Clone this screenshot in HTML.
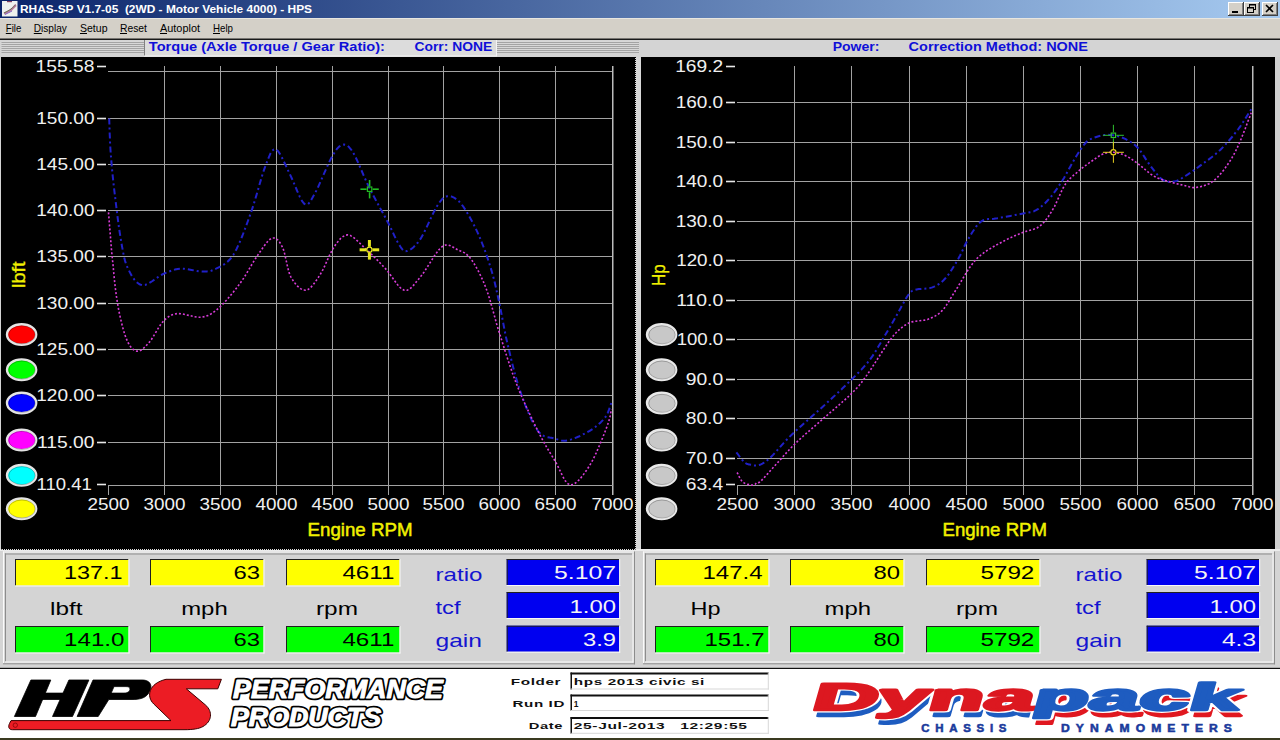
<!DOCTYPE html><html><head><meta charset="utf-8"><style>html,body{margin:0;padding:0;background:#d4d4d4;overflow:hidden}svg{display:block}text{font-family:"Liberation Sans",sans-serif;white-space:pre}</style></head><body>
<svg width="1280" height="740" viewBox="0 0 1280 740" shape-rendering="auto">
<defs><linearGradient id="tg" x1="0" x2="1" y1="0" y2="0"><stop offset="0" stop-color="#0a246a"/><stop offset="1" stop-color="#a6caf0"/></linearGradient><pattern id="checker" x="0" y="0" width="2" height="2" patternUnits="userSpaceOnUse"><rect width="2" height="2" fill="#d8d8d8"/><rect width="1" height="1" fill="#000"/><rect x="1" y="1" width="1" height="1" fill="#000"/></pattern><pattern id="stripe" x="0" y="41" width="4" height="2" patternUnits="userSpaceOnUse"><rect width="4" height="1" fill="#d8d8d8"/><rect y="1" width="4" height="1" fill="#a4a4a4"/></pattern></defs>
<rect x="0" y="0" width="1280" height="740" fill="#d4d4d4" />
<rect x="0" y="0" width="1280" height="18" fill="url(#tg)" />
<g><rect x="2" y="1" width="15.5" height="15.5" fill="#eef2ee"/><path d="M4 13.5 C7 12 9 11.5 11 10 C13 8.5 14 6.5 16 5" stroke="#c080a0" stroke-width="2.2" fill="none"/><path d="M4 13 C7 11.5 9 10.5 11 9 C13 7.5 14 6 15.5 5" stroke="#607050" stroke-width="1" fill="none"/><path d="M5 14.5 C8 13 10 12 12 11" stroke="#8060c0" stroke-width="1" fill="none"/><rect x="7" y="1" width="5" height="1.2" fill="#804060"/></g>
<text x="20.00" y="12.80" font-size="11" font-weight="bold" font-style="normal" fill="#fff" textLength="292.00" lengthAdjust="spacingAndGlyphs" >RHAS-SP V1.7-05  (2WD - Motor Vehicle 4000) - HPS</text>
<rect x="1228" y="2" width="16" height="14" fill="#d4d0c8" />
<line x1="1228" y1="2.5" x2="1243" y2="2.5" stroke="#fff" stroke-width="1" />
<line x1="1228.5" y1="2" x2="1228.5" y2="15" stroke="#fff" stroke-width="1" />
<line x1="1228" y1="15.5" x2="1244" y2="15.5" stroke="#404040" stroke-width="1" />
<line x1="1243.5" y1="2" x2="1243.5" y2="16" stroke="#404040" stroke-width="1" />
<line x1="1229" y1="14.5" x2="1243" y2="14.5" stroke="#808080" stroke-width="1" />
<line x1="1242.5" y1="3" x2="1242.5" y2="15" stroke="#808080" stroke-width="1" />
<rect x="1232" y="11" width="6" height="2" fill="#000"/>
<rect x="1244" y="2" width="16" height="14" fill="#d4d0c8" />
<line x1="1244" y1="2.5" x2="1259" y2="2.5" stroke="#fff" stroke-width="1" />
<line x1="1244.5" y1="2" x2="1244.5" y2="15" stroke="#fff" stroke-width="1" />
<line x1="1244" y1="15.5" x2="1260" y2="15.5" stroke="#404040" stroke-width="1" />
<line x1="1259.5" y1="2" x2="1259.5" y2="16" stroke="#404040" stroke-width="1" />
<line x1="1245" y1="14.5" x2="1259" y2="14.5" stroke="#808080" stroke-width="1" />
<line x1="1258.5" y1="3" x2="1258.5" y2="15" stroke="#808080" stroke-width="1" />
<rect x="1249.5" y="4.5" width="6" height="5" fill="none" stroke="#000"/><rect x="1249" y="4" width="7" height="1.5" fill="#000"/><rect x="1247.5" y="7.5" width="6" height="5" fill="#d4d0c8" stroke="#000"/><rect x="1247" y="7" width="7" height="1.5" fill="#000"/>
<rect x="1262" y="2" width="16" height="14" fill="#d4d0c8" />
<line x1="1262" y1="2.5" x2="1277" y2="2.5" stroke="#fff" stroke-width="1" />
<line x1="1262.5" y1="2" x2="1262.5" y2="15" stroke="#fff" stroke-width="1" />
<line x1="1262" y1="15.5" x2="1278" y2="15.5" stroke="#404040" stroke-width="1" />
<line x1="1277.5" y1="2" x2="1277.5" y2="16" stroke="#404040" stroke-width="1" />
<line x1="1263" y1="14.5" x2="1277" y2="14.5" stroke="#808080" stroke-width="1" />
<line x1="1276.5" y1="3" x2="1276.5" y2="15" stroke="#808080" stroke-width="1" />
<path d="M1266 5 L1273 12 M1273 5 L1266 12" stroke="#000" stroke-width="1.6"/>
<rect x="0" y="18" width="1280" height="21" fill="#d4d0c8" />
<line x1="0" y1="18.5" x2="1280" y2="18.5" stroke="#e8e6e0" stroke-width="1" />
<text x="5.80" y="31.80" font-size="11" font-weight="normal" font-style="normal" fill="#000" textLength="15.60" lengthAdjust="spacingAndGlyphs" >File</text>
<rect x="5.8" y="33" width="6" height="1" fill="#000" />
<text x="33.80" y="31.80" font-size="11" font-weight="normal" font-style="normal" fill="#000" textLength="33.00" lengthAdjust="spacingAndGlyphs" >Display</text>
<rect x="33.8" y="33" width="8" height="1" fill="#000" />
<text x="80.00" y="31.80" font-size="11" font-weight="normal" font-style="normal" fill="#000" textLength="27.50" lengthAdjust="spacingAndGlyphs" >Setup</text>
<rect x="80" y="33" width="7" height="1" fill="#000" />
<text x="120.00" y="31.80" font-size="11" font-weight="normal" font-style="normal" fill="#000" textLength="27.00" lengthAdjust="spacingAndGlyphs" >Reset</text>
<rect x="120" y="33" width="7" height="1" fill="#000" />
<text x="160.00" y="31.80" font-size="11" font-weight="normal" font-style="normal" fill="#000" textLength="40.00" lengthAdjust="spacingAndGlyphs" >Autoplot</text>
<rect x="160" y="33" width="7" height="1" fill="#000" />
<text x="213.00" y="31.80" font-size="11" font-weight="normal" font-style="normal" fill="#000" textLength="20.00" lengthAdjust="spacingAndGlyphs" >Help</text>
<rect x="213" y="33" width="7" height="1" fill="#000" />
<rect x="0" y="38.5" width="1280" height="1.5" fill="#1a1a1a" />
<rect x="0" y="40" width="1280" height="17" fill="#d4d4d4" />
<rect x="1.5" y="41" width="142.5" height="12" fill="url(#stripe)" />
<rect x="144" y="40" width="353" height="16" fill="#dcdcdc" />
<rect x="144" y="40" width="1" height="16" fill="#808080" />
<rect x="144" y="55.5" width="353" height="1" fill="#f4f4f4" />
<rect x="496" y="40" width="1" height="16" fill="#f4f4f4" />
<rect x="497" y="41" width="142" height="12" fill="url(#stripe)" />
<text x="148.80" y="51.00" font-size="13.5" font-weight="bold" font-style="normal" fill="#0f0fd8" textLength="236.20" lengthAdjust="spacingAndGlyphs" >Torque (Axle Torque / Gear Ratio):</text>
<text x="414.50" y="51.00" font-size="13.5" font-weight="bold" font-style="normal" fill="#0f0fd8" textLength="77.70" lengthAdjust="spacingAndGlyphs" >Corr: NONE</text>
<text x="832.70" y="51.00" font-size="13.5" font-weight="bold" font-style="normal" fill="#0f0fd8" textLength="46.80" lengthAdjust="spacingAndGlyphs" >Power:</text>
<text x="908.60" y="51.00" font-size="13.5" font-weight="bold" font-style="normal" fill="#0f0fd8" textLength="179.40" lengthAdjust="spacingAndGlyphs" >Correction Method: NONE</text>
<rect x="1" y="57" width="634" height="492" fill="#000" />
<rect x="641" y="57" width="634" height="492" fill="#000" />
<rect x="635" y="57" width="6" height="493" fill="#d8d8d8" />
<rect x="635" y="57" width="1" height="493" fill="url(#checker)" />
<rect x="1275" y="57" width="5" height="492" fill="#d0d0d0" />
<line x1="108" y1="71.5" x2="613" y2="71.5" stroke="#a2a2a2" stroke-width="1" />
<line x1="108" y1="118.5" x2="613" y2="118.5" stroke="#a2a2a2" stroke-width="1" />
<line x1="108" y1="164.5" x2="613" y2="164.5" stroke="#a2a2a2" stroke-width="1" />
<line x1="108" y1="210.5" x2="613" y2="210.5" stroke="#a2a2a2" stroke-width="1" />
<line x1="108" y1="256.5" x2="613" y2="256.5" stroke="#a2a2a2" stroke-width="1" />
<line x1="108" y1="303.5" x2="613" y2="303.5" stroke="#a2a2a2" stroke-width="1" />
<line x1="108" y1="349.5" x2="613" y2="349.5" stroke="#a2a2a2" stroke-width="1" />
<line x1="108" y1="395.5" x2="613" y2="395.5" stroke="#a2a2a2" stroke-width="1" />
<line x1="108" y1="442.5" x2="613" y2="442.5" stroke="#a2a2a2" stroke-width="1" />
<line x1="164.5" y1="66" x2="164.5" y2="495" stroke="#a2a2a2" stroke-width="1" />
<line x1="220.5" y1="66" x2="220.5" y2="495" stroke="#a2a2a2" stroke-width="1" />
<line x1="276.5" y1="66" x2="276.5" y2="495" stroke="#a2a2a2" stroke-width="1" />
<line x1="332.5" y1="66" x2="332.5" y2="495" stroke="#a2a2a2" stroke-width="1" />
<line x1="388.5" y1="66" x2="388.5" y2="495" stroke="#a2a2a2" stroke-width="1" />
<line x1="443.5" y1="66" x2="443.5" y2="495" stroke="#a2a2a2" stroke-width="1" />
<line x1="499.5" y1="66" x2="499.5" y2="495" stroke="#a2a2a2" stroke-width="1" />
<line x1="555.5" y1="66" x2="555.5" y2="495" stroke="#a2a2a2" stroke-width="1" />
<line x1="612.75" y1="66" x2="612.75" y2="495" stroke="#bcbcbc" stroke-width="1.5" />
<line x1="108.5" y1="485" x2="108.5" y2="495" stroke="#a2a2a2" stroke-width="1" />
<line x1="108" y1="485.5" x2="613" y2="485.5" stroke="#a2a2a2" stroke-width="1" />
<line x1="97" y1="66.5" x2="106" y2="66.5" stroke="#e8e8e8" stroke-width="1.6" />
<text x="35.50" y="72.00" font-size="16.5" font-weight="normal" font-style="normal" fill="#f0f0f0" textLength="59.00" lengthAdjust="spacingAndGlyphs" >155.58</text>
<line x1="97" y1="118.5" x2="106" y2="118.5" stroke="#e8e8e8" stroke-width="1.6" />
<text x="36.20" y="124.00" font-size="16.5" font-weight="normal" font-style="normal" fill="#f0f0f0" textLength="58.30" lengthAdjust="spacingAndGlyphs" >150.00</text>
<line x1="97" y1="164.5" x2="106" y2="164.5" stroke="#e8e8e8" stroke-width="1.6" />
<text x="36.20" y="170.00" font-size="16.5" font-weight="normal" font-style="normal" fill="#f0f0f0" textLength="58.30" lengthAdjust="spacingAndGlyphs" >145.00</text>
<line x1="97" y1="210.5" x2="106" y2="210.5" stroke="#e8e8e8" stroke-width="1.6" />
<text x="36.20" y="216.00" font-size="16.5" font-weight="normal" font-style="normal" fill="#f0f0f0" textLength="58.30" lengthAdjust="spacingAndGlyphs" >140.00</text>
<line x1="97" y1="256.5" x2="106" y2="256.5" stroke="#e8e8e8" stroke-width="1.6" />
<text x="36.20" y="262.00" font-size="16.5" font-weight="normal" font-style="normal" fill="#f0f0f0" textLength="58.30" lengthAdjust="spacingAndGlyphs" >135.00</text>
<line x1="97" y1="303.5" x2="106" y2="303.5" stroke="#e8e8e8" stroke-width="1.6" />
<text x="36.20" y="309.00" font-size="16.5" font-weight="normal" font-style="normal" fill="#f0f0f0" textLength="58.30" lengthAdjust="spacingAndGlyphs" >130.00</text>
<line x1="97" y1="349.5" x2="106" y2="349.5" stroke="#e8e8e8" stroke-width="1.6" />
<text x="36.20" y="355.00" font-size="16.5" font-weight="normal" font-style="normal" fill="#f0f0f0" textLength="58.30" lengthAdjust="spacingAndGlyphs" >125.00</text>
<line x1="97" y1="395.5" x2="106" y2="395.5" stroke="#e8e8e8" stroke-width="1.6" />
<text x="36.20" y="401.00" font-size="16.5" font-weight="normal" font-style="normal" fill="#f0f0f0" textLength="58.30" lengthAdjust="spacingAndGlyphs" >120.00</text>
<line x1="97" y1="442.5" x2="106" y2="442.5" stroke="#e8e8e8" stroke-width="1.6" />
<text x="37.00" y="448.00" font-size="16.5" font-weight="normal" font-style="normal" fill="#f0f0f0" textLength="57.50" lengthAdjust="spacingAndGlyphs" >115.00</text>
<line x1="97" y1="484.5" x2="106" y2="484.5" stroke="#e8e8e8" stroke-width="1.6" />
<text x="36.50" y="490.00" font-size="16.5" font-weight="normal" font-style="normal" fill="#f0f0f0" textLength="55.30" lengthAdjust="spacingAndGlyphs" >110.41</text>
<text x="87.50" y="510.00" font-size="16.5" font-weight="normal" font-style="normal" fill="#f0f0f0" textLength="42.00" lengthAdjust="spacingAndGlyphs" >2500</text>
<text x="143.50" y="510.00" font-size="16.5" font-weight="normal" font-style="normal" fill="#f0f0f0" textLength="42.00" lengthAdjust="spacingAndGlyphs" >3000</text>
<text x="199.50" y="510.00" font-size="16.5" font-weight="normal" font-style="normal" fill="#f0f0f0" textLength="42.00" lengthAdjust="spacingAndGlyphs" >3500</text>
<text x="255.50" y="510.00" font-size="16.5" font-weight="normal" font-style="normal" fill="#f0f0f0" textLength="42.00" lengthAdjust="spacingAndGlyphs" >4000</text>
<text x="311.50" y="510.00" font-size="16.5" font-weight="normal" font-style="normal" fill="#f0f0f0" textLength="42.00" lengthAdjust="spacingAndGlyphs" >4500</text>
<text x="367.50" y="510.00" font-size="16.5" font-weight="normal" font-style="normal" fill="#f0f0f0" textLength="42.00" lengthAdjust="spacingAndGlyphs" >5000</text>
<text x="422.50" y="510.00" font-size="16.5" font-weight="normal" font-style="normal" fill="#f0f0f0" textLength="42.00" lengthAdjust="spacingAndGlyphs" >5500</text>
<text x="478.50" y="510.00" font-size="16.5" font-weight="normal" font-style="normal" fill="#f0f0f0" textLength="42.00" lengthAdjust="spacingAndGlyphs" >6000</text>
<text x="534.50" y="510.00" font-size="16.5" font-weight="normal" font-style="normal" fill="#f0f0f0" textLength="42.00" lengthAdjust="spacingAndGlyphs" >6500</text>
<text x="591.50" y="510.00" font-size="16.5" font-weight="normal" font-style="normal" fill="#f0f0f0" textLength="42.00" lengthAdjust="spacingAndGlyphs" >7000</text>
<path d="M109.2 118.5 L109.3 121.9 L109.5 126.4 L109.6 131.9 L109.9 137.9 L110.1 144.0 L110.5 150.0 L110.9 155.8 L111.4 161.6 L111.9 167.6 L112.5 173.9 L113.2 180.6 L114.0 187.8 L115.0 196.0 L116.1 205.2 L117.3 214.8 L118.5 224.2 L119.8 233.0 L121.0 240.5 L122.1 246.8 L123.1 252.1 L124.0 256.9 L125.1 261.1 L126.4 265.0 L128.0 268.7 L129.9 272.4 L131.9 276.1 L134.2 279.4 L136.7 282.2 L139.4 284.2 L142.2 285.2 L145.3 284.9 L148.8 283.3 L152.5 281.0 L156.2 278.3 L159.8 275.8 L163.2 274.0 L166.3 272.7 L169.2 271.5 L172.0 270.5 L174.8 269.6 L177.7 269.0 L180.8 268.7 L184.2 268.8 L187.8 269.2 L191.6 269.9 L195.3 270.7 L198.7 271.3 L201.9 271.5 L204.6 271.5 L207.0 271.4 L209.2 271.2 L211.3 270.7 L213.5 269.9 L216.0 268.7 L218.7 267.3 L221.6 265.9 L224.5 264.1 L227.5 261.8 L230.5 258.7 L233.5 254.6 L236.5 249.2 L239.5 242.7 L242.5 235.5 L245.4 227.8 L248.3 220.0 L251.0 212.4 L253.6 204.7 L256.1 196.4 L258.5 188.1 L260.8 180.1 L263.0 172.8 L265.1 166.8 L267.0 161.8 L268.8 157.3 L270.4 153.6 L272.0 150.9 L273.8 149.4 L275.7 149.2 L277.8 150.8 L280.1 154.1 L282.4 158.5 L284.9 163.6 L287.3 168.9 L289.7 173.8 L292.1 179.0 L294.7 184.9 L297.2 191.0 L299.7 196.6 L302.1 201.1 L304.3 203.8 L306.3 204.6 L308.0 204.1 L309.6 202.5 L311.2 199.9 L313.0 196.7 L315.1 193.0 L317.6 188.3 L320.3 182.2 L323.2 175.5 L326.2 168.8 L328.9 162.7 L331.4 157.8 L333.5 154.1 L335.4 151.1 L337.1 148.7 L338.8 146.9 L340.5 145.6 L342.2 144.9 L343.9 144.6 L345.6 144.9 L347.3 145.6 L349.0 147.1 L350.9 149.3 L353.0 152.4 L355.4 156.7 L357.9 162.1 L360.6 168.3 L363.4 174.8 L366.3 181.4 L369.2 187.6 L372.3 193.6 L375.6 199.8 L379.0 206.0 L382.3 212.0 L385.4 217.6 L388.1 222.7 L390.4 227.3 L392.4 231.4 L394.2 235.3 L395.8 238.7 L397.4 241.7 L398.9 244.3 L400.3 246.5 L401.6 248.4 L402.8 249.8 L404.0 250.8 L405.4 251.2 L407.0 251.1 L408.9 250.4 L411.0 249.2 L413.2 247.4 L415.6 245.2 L418.0 242.3 L420.5 238.9 L423.1 234.4 L425.9 228.8 L428.8 222.6 L431.7 216.4 L434.4 210.9 L436.8 206.5 L438.9 203.3 L440.7 200.8 L442.4 198.8 L444.0 197.5 L445.7 196.6 L447.6 196.2 L449.7 196.2 L451.8 196.6 L454.0 197.6 L456.3 199.1 L458.7 201.1 L461.1 203.8 L463.7 207.2 L466.4 211.4 L469.2 216.2 L472.0 221.3 L474.8 226.6 L477.3 231.9 L479.7 237.3 L482.0 243.0 L484.3 248.8 L486.4 254.7 L488.4 260.7 L490.3 266.5 L492.0 272.2 L493.5 277.7 L494.9 283.2 L496.2 288.9 L497.5 294.7 L498.9 301.0 L500.3 307.7 L501.6 314.6 L503.0 321.8 L504.4 329.2 L505.9 336.7 L507.6 344.3 L509.5 352.1 L511.4 360.2 L513.5 368.4 L515.7 376.5 L518.0 384.4 L520.5 391.9 L523.1 399.2 L525.9 406.7 L528.9 413.8 L531.9 420.5 L534.9 426.2 L537.8 430.8 L540.7 434.0 L543.7 435.9 L546.7 437.0 L549.7 437.6 L552.5 438.0 L555.1 438.6 L557.4 439.4 L559.4 440.0 L561.3 440.5 L563.3 440.8 L565.5 440.7 L568.1 440.3 L571.3 439.4 L574.9 438.1 L578.8 436.5 L582.7 434.6 L586.4 432.7 L589.7 430.8 L592.7 428.9 L595.6 426.8 L598.2 424.6 L600.7 422.4 L602.9 420.1 L604.9 417.8 L606.6 415.2 L608.0 412.4 L609.1 409.4 L610.0 406.7 L610.8 404.4 L611.4 402.7" fill="none" stroke="#2020c8" stroke-width="2" stroke-dasharray="6 3 2 3" stroke-linejoin="round"/>
<path d="M108.5 212.4 L108.9 217.4 L109.4 224.2 L110.1 232.3 L110.8 241.1 L111.5 249.9 L112.3 258.0 L113.1 265.7 L113.8 273.6 L114.6 281.6 L115.5 289.3 L116.5 296.8 L117.6 303.8 L118.8 310.5 L120.2 317.1 L121.7 323.4 L123.2 329.3 L124.8 334.5 L126.4 338.9 L128.0 342.5 L129.7 345.5 L131.4 347.8 L133.2 349.5 L135.0 350.6 L136.9 351.2 L138.8 351.1 L140.8 350.3 L142.8 348.9 L144.9 347.0 L147.0 344.8 L149.2 342.4 L151.4 339.5 L153.7 335.8 L156.1 331.8 L158.5 327.9 L160.8 324.3 L163.2 321.4 L165.4 319.2 L167.5 317.4 L169.6 316.0 L171.8 314.9 L174.3 314.1 L177.3 313.6 L180.9 313.7 L185.0 314.5 L189.4 315.5 L193.8 316.6 L198.1 317.2 L201.9 317.2 L205.2 316.5 L208.2 315.4 L210.9 314.0 L213.6 312.2 L216.5 310.0 L219.5 307.3 L222.8 304.1 L226.4 300.3 L230.0 296.1 L233.6 291.7 L237.2 287.2 L240.5 282.7 L243.7 278.1 L246.7 273.2 L249.7 268.1 L252.6 263.2 L255.4 258.7 L258.1 254.6 L260.7 250.9 L263.2 247.3 L265.6 244.0 L267.9 241.2 L270.1 239.2 L272.2 238.1 L274.2 238.0 L276.1 238.6 L277.8 240.0 L279.5 242.0 L281.1 244.6 L282.7 247.6 L284.1 251.5 L285.3 256.5 L286.5 261.9 L287.7 267.5 L289.1 272.6 L290.8 276.8 L292.9 280.3 L295.3 283.6 L297.8 286.4 L300.5 288.6 L303.1 290.0 L305.7 290.3 L308.2 289.4 L310.7 287.5 L313.2 284.7 L315.7 281.3 L318.1 277.7 L320.5 274.0 L322.8 269.9 L325.1 265.2 L327.3 260.2 L329.5 255.3 L331.8 250.8 L334.0 247.0 L336.2 243.8 L338.4 241.0 L340.6 238.5 L342.9 236.6 L345.2 235.3 L347.6 234.9 L350.1 235.4 L352.6 236.8 L355.2 238.8 L357.9 241.4 L360.8 244.2 L363.8 247.0 L367.1 250.0 L370.7 253.5 L374.4 257.2 L378.2 261.0 L381.9 264.9 L385.4 268.6 L388.7 272.6 L392.0 277.1 L395.2 281.6 L398.3 285.7 L401.3 288.7 L404.3 290.3 L407.1 290.3 L409.7 289.0 L412.2 286.8 L414.8 283.8 L417.5 280.4 L420.5 276.8 L423.9 272.3 L427.5 266.7 L431.4 260.6 L435.2 254.7 L438.9 249.8 L442.2 246.5 L445.2 245.1 L448.0 245.0 L450.6 245.8 L453.2 247.2 L455.6 248.7 L458.0 250.0 L460.3 250.9 L462.5 251.8 L464.6 252.9 L466.6 254.3 L468.8 256.3 L471.0 259.0 L473.4 262.5 L475.9 266.7 L478.5 271.4 L481.1 276.6 L483.6 282.2 L486.0 288.1 L488.2 294.4 L490.3 301.2 L492.3 308.3 L494.4 315.8 L496.5 323.5 L498.9 331.4 L501.5 339.6 L504.2 348.2 L507.0 357.0 L510.0 365.9 L513.0 374.7 L516.2 383.2 L519.6 391.6 L523.2 400.0 L527.0 408.3 L530.8 416.4 L534.4 423.9 L537.8 430.8 L541.0 436.9 L544.0 442.4 L546.8 447.4 L549.6 452.1 L552.4 456.6 L555.1 461.1 L557.7 465.9 L560.2 471.1 L562.6 476.1 L565.0 480.4 L567.5 483.5 L570.3 484.9 L573.3 484.4 L576.5 482.3 L579.9 479.1 L583.2 474.9 L586.5 470.3 L589.7 465.4 L592.9 459.8 L596.1 453.1 L599.3 445.8 L602.3 438.6 L604.9 432.0 L607.0 426.5 L608.5 422.2 L609.6 418.5 L610.3 415.4 L610.7 412.9 L611.1 410.8 L611.4 409.2" fill="none" stroke="#d83cd8" stroke-width="1.6" stroke-dasharray="2 2" stroke-linejoin="round"/>
<line x1="737" y1="102.5" x2="1253" y2="102.5" stroke="#a2a2a2" stroke-width="1" />
<line x1="737" y1="142.5" x2="1253" y2="142.5" stroke="#a2a2a2" stroke-width="1" />
<line x1="737" y1="181.5" x2="1253" y2="181.5" stroke="#a2a2a2" stroke-width="1" />
<line x1="737" y1="221.5" x2="1253" y2="221.5" stroke="#a2a2a2" stroke-width="1" />
<line x1="737" y1="260.5" x2="1253" y2="260.5" stroke="#a2a2a2" stroke-width="1" />
<line x1="737" y1="300.5" x2="1253" y2="300.5" stroke="#a2a2a2" stroke-width="1" />
<line x1="737" y1="339.5" x2="1253" y2="339.5" stroke="#a2a2a2" stroke-width="1" />
<line x1="737" y1="379.5" x2="1253" y2="379.5" stroke="#a2a2a2" stroke-width="1" />
<line x1="737" y1="418.5" x2="1253" y2="418.5" stroke="#a2a2a2" stroke-width="1" />
<line x1="737" y1="458.5" x2="1253" y2="458.5" stroke="#a2a2a2" stroke-width="1" />
<line x1="794.5" y1="66" x2="794.5" y2="495" stroke="#a2a2a2" stroke-width="1" />
<line x1="851.5" y1="66" x2="851.5" y2="495" stroke="#a2a2a2" stroke-width="1" />
<line x1="909.5" y1="66" x2="909.5" y2="495" stroke="#a2a2a2" stroke-width="1" />
<line x1="966.5" y1="66" x2="966.5" y2="495" stroke="#a2a2a2" stroke-width="1" />
<line x1="1023.5" y1="66" x2="1023.5" y2="495" stroke="#a2a2a2" stroke-width="1" />
<line x1="1080.5" y1="66" x2="1080.5" y2="495" stroke="#a2a2a2" stroke-width="1" />
<line x1="1137.5" y1="66" x2="1137.5" y2="495" stroke="#a2a2a2" stroke-width="1" />
<line x1="1194.5" y1="66" x2="1194.5" y2="495" stroke="#a2a2a2" stroke-width="1" />
<line x1="1252.75" y1="66" x2="1252.75" y2="495" stroke="#bcbcbc" stroke-width="1.5" />
<line x1="737.5" y1="485" x2="737.5" y2="495" stroke="#a2a2a2" stroke-width="1" />
<line x1="737" y1="485.5" x2="1253" y2="485.5" stroke="#a2a2a2" stroke-width="1" />
<line x1="726" y1="66.5" x2="735" y2="66.5" stroke="#e8e8e8" stroke-width="1.6" />
<text x="675.20" y="72.00" font-size="16.5" font-weight="normal" font-style="normal" fill="#f0f0f0" textLength="48.00" lengthAdjust="spacingAndGlyphs" >169.2</text>
<line x1="726" y1="102.5" x2="735" y2="102.5" stroke="#e8e8e8" stroke-width="1.6" />
<text x="675.70" y="108.00" font-size="16.5" font-weight="normal" font-style="normal" fill="#f0f0f0" textLength="47.50" lengthAdjust="spacingAndGlyphs" >160.0</text>
<line x1="726" y1="142.5" x2="735" y2="142.5" stroke="#e8e8e8" stroke-width="1.6" />
<text x="675.70" y="148.00" font-size="16.5" font-weight="normal" font-style="normal" fill="#f0f0f0" textLength="47.50" lengthAdjust="spacingAndGlyphs" >150.0</text>
<line x1="726" y1="181.5" x2="735" y2="181.5" stroke="#e8e8e8" stroke-width="1.6" />
<text x="675.70" y="187.00" font-size="16.5" font-weight="normal" font-style="normal" fill="#f0f0f0" textLength="47.50" lengthAdjust="spacingAndGlyphs" >140.0</text>
<line x1="726" y1="221.5" x2="735" y2="221.5" stroke="#e8e8e8" stroke-width="1.6" />
<text x="675.70" y="227.00" font-size="16.5" font-weight="normal" font-style="normal" fill="#f0f0f0" textLength="47.50" lengthAdjust="spacingAndGlyphs" >130.0</text>
<line x1="726" y1="260.5" x2="735" y2="260.5" stroke="#e8e8e8" stroke-width="1.6" />
<text x="676.20" y="266.00" font-size="16.5" font-weight="normal" font-style="normal" fill="#f0f0f0" textLength="47.00" lengthAdjust="spacingAndGlyphs" >120.0</text>
<line x1="726" y1="300.5" x2="735" y2="300.5" stroke="#e8e8e8" stroke-width="1.6" />
<text x="676.20" y="306.00" font-size="16.5" font-weight="normal" font-style="normal" fill="#f0f0f0" textLength="47.00" lengthAdjust="spacingAndGlyphs" >110.0</text>
<line x1="726" y1="339.5" x2="735" y2="339.5" stroke="#e8e8e8" stroke-width="1.6" />
<text x="676.70" y="345.00" font-size="16.5" font-weight="normal" font-style="normal" fill="#f0f0f0" textLength="46.50" lengthAdjust="spacingAndGlyphs" >100.0</text>
<line x1="726" y1="379.5" x2="735" y2="379.5" stroke="#e8e8e8" stroke-width="1.6" />
<text x="685.70" y="385.00" font-size="16.5" font-weight="normal" font-style="normal" fill="#f0f0f0" textLength="37.50" lengthAdjust="spacingAndGlyphs" >90.0</text>
<line x1="726" y1="418.5" x2="735" y2="418.5" stroke="#e8e8e8" stroke-width="1.6" />
<text x="685.70" y="424.00" font-size="16.5" font-weight="normal" font-style="normal" fill="#f0f0f0" textLength="37.50" lengthAdjust="spacingAndGlyphs" >80.0</text>
<line x1="726" y1="458.5" x2="735" y2="458.5" stroke="#e8e8e8" stroke-width="1.6" />
<text x="685.70" y="464.00" font-size="16.5" font-weight="normal" font-style="normal" fill="#f0f0f0" textLength="37.50" lengthAdjust="spacingAndGlyphs" >70.0</text>
<line x1="726" y1="484.5" x2="735" y2="484.5" stroke="#e8e8e8" stroke-width="1.6" />
<text x="685.70" y="490.00" font-size="16.5" font-weight="normal" font-style="normal" fill="#f0f0f0" textLength="37.50" lengthAdjust="spacingAndGlyphs" >63.4</text>
<text x="716.50" y="510.00" font-size="16.5" font-weight="normal" font-style="normal" fill="#f0f0f0" textLength="42.00" lengthAdjust="spacingAndGlyphs" >2500</text>
<text x="773.50" y="510.00" font-size="16.5" font-weight="normal" font-style="normal" fill="#f0f0f0" textLength="42.00" lengthAdjust="spacingAndGlyphs" >3000</text>
<text x="830.50" y="510.00" font-size="16.5" font-weight="normal" font-style="normal" fill="#f0f0f0" textLength="42.00" lengthAdjust="spacingAndGlyphs" >3500</text>
<text x="888.50" y="510.00" font-size="16.5" font-weight="normal" font-style="normal" fill="#f0f0f0" textLength="42.00" lengthAdjust="spacingAndGlyphs" >4000</text>
<text x="945.50" y="510.00" font-size="16.5" font-weight="normal" font-style="normal" fill="#f0f0f0" textLength="42.00" lengthAdjust="spacingAndGlyphs" >4500</text>
<text x="1002.50" y="510.00" font-size="16.5" font-weight="normal" font-style="normal" fill="#f0f0f0" textLength="42.00" lengthAdjust="spacingAndGlyphs" >5000</text>
<text x="1059.50" y="510.00" font-size="16.5" font-weight="normal" font-style="normal" fill="#f0f0f0" textLength="42.00" lengthAdjust="spacingAndGlyphs" >5500</text>
<text x="1116.50" y="510.00" font-size="16.5" font-weight="normal" font-style="normal" fill="#f0f0f0" textLength="42.00" lengthAdjust="spacingAndGlyphs" >6000</text>
<text x="1173.50" y="510.00" font-size="16.5" font-weight="normal" font-style="normal" fill="#f0f0f0" textLength="42.00" lengthAdjust="spacingAndGlyphs" >6500</text>
<text x="1231.50" y="510.00" font-size="16.5" font-weight="normal" font-style="normal" fill="#f0f0f0" textLength="42.00" lengthAdjust="spacingAndGlyphs" >7000</text>
<path d="M736.4 452.4 L737.0 453.2 L737.8 454.2 L738.8 455.5 L739.8 456.8 L740.7 458.1 L741.6 459.1 L742.3 460.0 L742.9 460.7 L743.5 461.5 L744.1 462.1 L744.8 462.7 L745.6 463.2 L746.5 463.7 L747.5 464.0 L748.6 464.4 L749.7 464.6 L750.8 464.8 L752.0 465.0 L753.1 465.2 L754.3 465.4 L755.4 465.6 L756.6 465.6 L757.9 465.5 L759.4 465.0 L760.9 464.4 L762.4 463.6 L764.0 462.7 L765.8 461.4 L767.9 459.8 L770.4 457.5 L773.3 454.6 L776.5 451.1 L780.0 447.1 L783.8 442.9 L787.9 438.5 L792.2 434.2 L796.9 429.8 L802.0 425.2 L807.4 420.4 L812.8 415.6 L818.2 410.8 L823.3 406.2 L828.3 401.6 L833.2 397.1 L838.1 392.5 L842.8 388.1 L847.2 383.8 L851.3 379.8 L855.0 376.1 L858.3 372.8 L861.4 369.6 L864.3 366.4 L867.2 363.1 L870.0 359.5 L872.8 355.6 L875.5 351.4 L878.1 347.1 L880.7 342.8 L883.1 338.6 L885.5 334.6 L887.8 330.8 L890.0 327.0 L892.0 323.4 L894.1 319.8 L896.0 316.3 L898.0 312.9 L899.9 309.4 L901.8 305.9 L903.7 302.5 L905.5 299.3 L907.2 296.5 L908.8 294.2 L910.2 292.6 L911.3 291.5 L912.4 290.8 L913.5 290.4 L914.9 290.0 L916.6 289.5 L918.8 289.1 L921.4 288.9 L924.2 288.7 L927.0 288.5 L929.8 288.1 L932.4 287.4 L934.7 286.4 L936.9 285.3 L939.1 283.9 L941.2 282.4 L943.3 280.5 L945.4 278.3 L947.6 275.7 L949.8 272.6 L952.0 269.2 L954.2 265.7 L956.3 262.2 L958.3 258.8 L960.1 255.5 L961.7 252.3 L963.2 249.0 L964.7 245.7 L966.3 242.5 L968.1 239.4 L970.0 236.2 L972.0 232.8 L974.2 229.5 L976.3 226.4 L978.6 223.7 L981.0 221.6 L983.4 220.2 L985.8 219.5 L988.3 219.1 L991.0 219.0 L993.9 218.8 L997.2 218.3 L1001.1 217.6 L1005.6 216.8 L1010.4 215.9 L1015.1 215.0 L1019.5 214.2 L1023.2 213.5 L1026.1 213.0 L1028.5 212.6 L1030.5 212.3 L1032.3 211.8 L1034.1 211.2 L1036.1 210.2 L1038.3 208.9 L1040.4 207.3 L1042.6 205.5 L1044.8 203.5 L1046.9 201.3 L1049.1 198.9 L1051.3 196.4 L1053.4 193.6 L1055.6 190.7 L1057.8 187.6 L1059.9 184.3 L1062.1 181.0 L1064.3 177.4 L1066.5 173.5 L1068.7 169.4 L1070.9 165.4 L1073.0 161.7 L1075.0 158.3 L1076.9 155.3 L1078.6 152.5 L1080.3 149.9 L1082.0 147.6 L1083.4 145.5 L1084.8 143.8 L1085.9 142.5 L1086.8 141.5 L1087.5 140.8 L1088.3 140.3 L1089.2 139.8 L1090.5 139.2 L1092.2 138.5 L1094.2 137.7 L1096.3 137.0 L1098.6 136.3 L1100.8 135.7 L1102.8 135.3 L1104.6 135.0 L1106.4 134.9 L1108.1 134.8 L1109.8 134.9 L1111.6 135.0 L1113.4 135.3 L1115.4 135.7 L1117.4 136.1 L1119.4 136.7 L1121.5 137.4 L1123.6 138.2 L1125.7 139.2 L1127.8 140.3 L1129.8 141.4 L1131.9 142.8 L1133.9 144.2 L1136.0 146.0 L1138.0 148.0 L1140.0 150.5 L1142.1 153.3 L1144.1 156.4 L1146.1 159.6 L1148.2 162.7 L1150.2 165.5 L1152.2 168.2 L1154.3 170.9 L1156.3 173.5 L1158.4 175.9 L1160.4 178.0 L1162.5 179.6 L1164.6 180.7 L1166.7 181.3 L1168.8 181.7 L1170.8 181.7 L1172.8 181.6 L1174.8 181.3 L1176.6 180.9 L1178.2 180.3 L1179.8 179.5 L1181.4 178.5 L1183.3 177.4 L1185.4 176.0 L1187.9 174.4 L1190.7 172.5 L1193.7 170.4 L1196.8 168.2 L1199.9 165.9 L1202.9 163.7 L1205.8 161.5 L1208.8 159.4 L1211.7 157.2 L1214.6 154.9 L1217.6 152.4 L1220.5 149.7 L1223.5 146.7 L1226.5 143.4 L1229.5 140.0 L1232.5 136.5 L1235.3 132.9 L1238.0 129.5 L1240.6 125.9 L1243.2 122.0 L1245.7 118.1 L1247.9 114.5 L1249.8 111.5 L1251.2 109.3" fill="none" stroke="#2020c8" stroke-width="2" stroke-dasharray="6 3 2 3" stroke-linejoin="round"/>
<path d="M737.1 472.5 L737.7 473.6 L738.5 475.3 L739.4 477.2 L740.5 479.1 L741.7 480.9 L743.0 482.2 L744.5 483.1 L746.1 483.9 L747.9 484.4 L749.7 484.8 L751.3 485.0 L752.7 485.1 L753.8 485.0 L754.6 484.6 L755.3 484.1 L755.9 483.5 L756.5 482.9 L757.2 482.5 L757.7 482.3 L758.1 482.4 L758.5 482.6 L759.0 482.5 L759.8 482.0 L761.1 480.8 L763.0 478.9 L765.3 476.4 L768.0 473.4 L770.8 470.2 L773.8 466.9 L776.7 463.7 L779.5 460.6 L782.3 457.4 L785.2 454.1 L788.3 450.7 L791.6 447.2 L795.3 443.5 L799.4 439.6 L803.9 435.5 L808.7 431.3 L813.6 427.1 L818.5 422.8 L823.3 418.6 L828.1 414.4 L833.1 410.1 L838.1 405.8 L842.9 401.5 L847.4 397.5 L851.3 393.7 L854.5 390.5 L857.1 387.7 L859.3 385.2 L861.5 382.5 L863.9 379.2 L866.9 375.1 L870.6 369.7 L874.8 363.2 L879.3 356.2 L883.8 349.2 L888.0 342.9 L891.7 337.8 L894.9 334.0 L897.7 331.0 L900.3 328.7 L902.7 326.8 L905.0 325.2 L907.3 323.8 L909.6 322.6 L911.8 321.9 L913.9 321.5 L915.9 321.2 L917.8 321.0 L919.7 320.7 L921.4 320.4 L923.0 320.2 L924.4 320.1 L925.9 319.8 L927.5 319.5 L929.2 318.8 L931.2 317.9 L933.2 317.0 L935.4 315.9 L937.7 314.5 L939.9 312.8 L942.1 310.7 L944.2 308.2 L946.3 305.3 L948.4 302.1 L950.5 298.6 L952.7 295.0 L955.1 291.2 L957.7 287.1 L960.4 282.6 L963.2 277.8 L966.0 273.2 L968.7 268.9 L971.3 265.3 L973.5 262.4 L975.5 260.0 L977.4 258.0 L979.4 256.2 L981.6 254.4 L984.3 252.4 L987.6 250.2 L991.4 247.9 L995.4 245.5 L999.6 243.3 L1003.5 241.2 L1007.0 239.4 L1010.1 237.9 L1012.9 236.6 L1015.5 235.4 L1018.0 234.4 L1020.6 233.3 L1023.2 232.3 L1025.9 231.4 L1028.7 230.6 L1031.5 229.9 L1034.2 229.1 L1036.9 228.0 L1039.4 226.4 L1041.8 224.4 L1044.0 222.1 L1046.1 219.6 L1048.2 216.7 L1050.3 213.6 L1052.4 210.2 L1054.6 206.3 L1056.7 201.8 L1058.9 197.0 L1061.0 192.3 L1063.1 188.0 L1065.3 184.3 L1067.5 181.3 L1069.7 178.9 L1071.8 176.8 L1074.0 174.9 L1076.2 173.1 L1078.3 171.3 L1080.4 169.5 L1082.4 167.9 L1084.4 166.3 L1086.5 164.9 L1088.5 163.4 L1090.5 162.0 L1092.6 160.5 L1094.7 159.0 L1096.8 157.6 L1098.8 156.2 L1100.8 155.0 L1102.8 154.1 L1104.6 153.4 L1106.4 152.9 L1108.1 152.5 L1109.8 152.3 L1111.6 152.2 L1113.4 152.3 L1115.4 152.5 L1117.4 152.9 L1119.4 153.4 L1121.5 154.1 L1123.6 154.9 L1125.7 155.8 L1127.7 156.8 L1129.7 157.9 L1131.6 159.2 L1133.6 160.6 L1135.8 162.1 L1138.0 163.7 L1140.4 165.6 L1143.0 167.7 L1145.7 170.0 L1148.5 172.3 L1151.1 174.3 L1153.7 176.0 L1156.1 177.3 L1158.4 178.3 L1160.6 179.1 L1162.9 179.9 L1165.3 180.5 L1167.8 181.3 L1170.6 182.1 L1173.7 182.9 L1176.8 183.7 L1179.9 184.5 L1182.8 185.1 L1185.4 185.7 L1187.5 186.2 L1189.2 186.8 L1190.8 187.2 L1192.3 187.5 L1193.9 187.6 L1195.9 187.5 L1198.2 187.1 L1200.8 186.6 L1203.6 185.9 L1206.4 184.9 L1209.1 183.7 L1211.7 182.2 L1214.2 180.3 L1216.6 178.2 L1218.9 175.7 L1221.2 173.1 L1223.5 170.3 L1225.7 167.3 L1227.8 164.3 L1229.9 161.2 L1231.9 157.9 L1233.9 154.4 L1235.9 150.5 L1238.0 146.2 L1240.3 141.0 L1242.8 134.7 L1245.4 128.2 L1247.7 121.9 L1249.8 116.6 L1251.2 112.8" fill="none" stroke="#d83cd8" stroke-width="1.6" stroke-dasharray="2 2" stroke-linejoin="round"/>
<text x="307.50" y="535.60" font-size="19" font-weight="normal" font-style="normal" fill="#f0f000" textLength="105.00" lengthAdjust="spacingAndGlyphs" stroke="#f0f000" stroke-width="0.5">Engine RPM</text>
<text x="942.50" y="535.60" font-size="19" font-weight="normal" font-style="normal" fill="#f0f000" textLength="104.50" lengthAdjust="spacingAndGlyphs" stroke="#f0f000" stroke-width="0.5">Engine RPM</text>
<text x="0" y="0" font-size="19" fill="#f0f000" stroke="#f0f000" stroke-width="0.3" textLength="26.5" lengthAdjust="spacingAndGlyphs" transform="translate(25.3 288) rotate(-90)">lbft</text>
<text x="0" y="0" font-size="19" fill="#f0f000" stroke="#f0f000" stroke-width="0.3" textLength="21.7" lengthAdjust="spacingAndGlyphs" transform="translate(665.4 286) rotate(-90)">Hp</text>
<ellipse cx="21.6" cy="334.5" rx="14.6" ry="10.3" fill="#ff0000" stroke="#e4e4e4" stroke-width="2.4"/>
<ellipse cx="22" cy="334.8" rx="13.2" ry="9" fill="none" stroke="#000" stroke-opacity="0.3" stroke-width="0.8"/>
<ellipse cx="661.6" cy="334.5" rx="14.6" ry="10.3" fill="#c8c8c8" stroke="#e8e8e8" stroke-width="2.4"/>
<ellipse cx="662" cy="334.8" rx="13.2" ry="9" fill="none" stroke="#000" stroke-opacity="0.3" stroke-width="0.8"/>
<ellipse cx="21.6" cy="369.7" rx="14.6" ry="10.3" fill="#00ff00" stroke="#e4e4e4" stroke-width="2.4"/>
<ellipse cx="22" cy="370.0" rx="13.2" ry="9" fill="none" stroke="#000" stroke-opacity="0.3" stroke-width="0.8"/>
<ellipse cx="661.6" cy="369.7" rx="14.6" ry="10.3" fill="#c8c8c8" stroke="#e8e8e8" stroke-width="2.4"/>
<ellipse cx="662" cy="370.0" rx="13.2" ry="9" fill="none" stroke="#000" stroke-opacity="0.3" stroke-width="0.8"/>
<ellipse cx="21.6" cy="403" rx="14.6" ry="10.3" fill="#0000ff" stroke="#e4e4e4" stroke-width="2.4"/>
<ellipse cx="22" cy="403.3" rx="13.2" ry="9" fill="none" stroke="#000" stroke-opacity="0.3" stroke-width="0.8"/>
<ellipse cx="661.6" cy="403" rx="14.6" ry="10.3" fill="#c8c8c8" stroke="#e8e8e8" stroke-width="2.4"/>
<ellipse cx="662" cy="403.3" rx="13.2" ry="9" fill="none" stroke="#000" stroke-opacity="0.3" stroke-width="0.8"/>
<ellipse cx="21.6" cy="440" rx="14.6" ry="10.3" fill="#ff00ff" stroke="#e4e4e4" stroke-width="2.4"/>
<ellipse cx="22" cy="440.3" rx="13.2" ry="9" fill="none" stroke="#000" stroke-opacity="0.3" stroke-width="0.8"/>
<ellipse cx="661.6" cy="440" rx="14.6" ry="10.3" fill="#c8c8c8" stroke="#e8e8e8" stroke-width="2.4"/>
<ellipse cx="662" cy="440.3" rx="13.2" ry="9" fill="none" stroke="#000" stroke-opacity="0.3" stroke-width="0.8"/>
<ellipse cx="21.6" cy="475.3" rx="14.6" ry="10.3" fill="#00ffff" stroke="#e4e4e4" stroke-width="2.4"/>
<ellipse cx="22" cy="475.6" rx="13.2" ry="9" fill="none" stroke="#000" stroke-opacity="0.3" stroke-width="0.8"/>
<ellipse cx="661.6" cy="475.3" rx="14.6" ry="10.3" fill="#c8c8c8" stroke="#e8e8e8" stroke-width="2.4"/>
<ellipse cx="662" cy="475.6" rx="13.2" ry="9" fill="none" stroke="#000" stroke-opacity="0.3" stroke-width="0.8"/>
<ellipse cx="21.6" cy="508.7" rx="14.6" ry="10.3" fill="#ffff00" stroke="#e4e4e4" stroke-width="2.4"/>
<ellipse cx="22" cy="509.0" rx="13.2" ry="9" fill="none" stroke="#000" stroke-opacity="0.3" stroke-width="0.8"/>
<ellipse cx="661.6" cy="508.7" rx="14.6" ry="10.3" fill="#c8c8c8" stroke="#e8e8e8" stroke-width="2.4"/>
<ellipse cx="662" cy="509.0" rx="13.2" ry="9" fill="none" stroke="#000" stroke-opacity="0.3" stroke-width="0.8"/>
<line x1="360.40000000000003" y1="189.2" x2="366.6" y2="189.2" stroke="#22bb22" stroke-width="1.6" />
<line x1="372.6" y1="189.2" x2="378.8" y2="189.2" stroke="#22bb22" stroke-width="1.6" />
<line x1="369.6" y1="180.0" x2="369.6" y2="186.2" stroke="#22bb22" stroke-width="1.6" />
<line x1="369.6" y1="192.2" x2="369.6" y2="198.39999999999998" stroke="#22bb22" stroke-width="1.6" />
<rect x="367.40000000000003" y="187.0" width="4.4" height="4.4" fill="none" stroke="#22bb22" stroke-width="1.2"/>
<line x1="359.59999999999997" y1="249.8" x2="366.4" y2="249.8" stroke="#e8e820" stroke-width="3" />
<line x1="372.4" y1="249.8" x2="379.2" y2="249.8" stroke="#e8e820" stroke-width="3" />
<line x1="369.4" y1="240.0" x2="369.4" y2="246.8" stroke="#e8e820" stroke-width="3" />
<line x1="369.4" y1="252.8" x2="369.4" y2="259.6" stroke="#e8e820" stroke-width="3" />
<circle cx="369.4" cy="249.8" r="2.6" fill="none" stroke="#e8e820" stroke-width="1.2"/>
<line x1="1102.9" y1="135.3" x2="1110.4" y2="135.3" stroke="#30c030" stroke-width="1" />
<line x1="1116.4" y1="135.3" x2="1123.9" y2="135.3" stroke="#30c030" stroke-width="1" />
<line x1="1113.4" y1="124.80000000000001" x2="1113.4" y2="132.3" stroke="#30c030" stroke-width="1" />
<line x1="1113.4" y1="138.3" x2="1113.4" y2="145.8" stroke="#30c030" stroke-width="1" />
<rect x="1111.2" y="133.10000000000002" width="4.4" height="4.4" fill="none" stroke="#30c030" stroke-width="1.2"/>
<line x1="1102.9" y1="152.3" x2="1110.4" y2="152.3" stroke="#e8d020" stroke-width="1" />
<line x1="1116.4" y1="152.3" x2="1123.9" y2="152.3" stroke="#e8d020" stroke-width="1" />
<line x1="1113.4" y1="141.8" x2="1113.4" y2="149.3" stroke="#e8d020" stroke-width="1" />
<line x1="1113.4" y1="155.3" x2="1113.4" y2="162.8" stroke="#e8d020" stroke-width="1" />
<circle cx="1113.4" cy="152.3" r="2.6" fill="none" stroke="#e8d020" stroke-width="1.2"/>
<rect x="0" y="549" width="1280" height="120" fill="#d4d4d4" />
<rect x="0" y="549" width="1280" height="2" fill="#ececec" />
<rect x="1.5" y="549" width="634" height="1" fill="url(#checker)" />
<rect x="3" y="551.5" width="631" height="1" fill="#fafafa" />
<rect x="3" y="551.5" width="1" height="112" fill="#fafafa" />
<rect x="5" y="553.5" width="627" height="1" fill="#8c8c8c" />
<rect x="5" y="553.5" width="1" height="108" fill="#8c8c8c" />
<rect x="5" y="661.5" width="628" height="1" fill="#fafafa" />
<rect x="632.5" y="553.5" width="1" height="109" fill="#fafafa" />
<rect x="3" y="663.3" width="631" height="1" fill="#8c8c8c" />
<rect x="634" y="551.5" width="1" height="113" fill="#8c8c8c" />
<rect x="15" y="559" width="113.5" height="26.5" fill="#ffff00" />
<rect x="15" y="559" width="113.5" height="1" fill="#202020" />
<rect x="15" y="559" width="1" height="26.5" fill="#202020" />
<rect x="15" y="585.5" width="114.5" height="1" fill="#f8f8f8" />
<rect x="128.5" y="559" width="1" height="27.5" fill="#f8f8f8" />
<rect x="15" y="626" width="113.5" height="26.5" fill="#00ff00" />
<rect x="15" y="626" width="113.5" height="1" fill="#202020" />
<rect x="15" y="626" width="1" height="26.5" fill="#202020" />
<rect x="15" y="652.5" width="114.5" height="1" fill="#f8f8f8" />
<rect x="128.5" y="626" width="1" height="27.5" fill="#f8f8f8" />
<rect x="150" y="559" width="113.5" height="26.5" fill="#ffff00" />
<rect x="150" y="559" width="113.5" height="1" fill="#202020" />
<rect x="150" y="559" width="1" height="26.5" fill="#202020" />
<rect x="150" y="585.5" width="114.5" height="1" fill="#f8f8f8" />
<rect x="263.5" y="559" width="1" height="27.5" fill="#f8f8f8" />
<rect x="150" y="626" width="113.5" height="26.5" fill="#00ff00" />
<rect x="150" y="626" width="113.5" height="1" fill="#202020" />
<rect x="150" y="626" width="1" height="26.5" fill="#202020" />
<rect x="150" y="652.5" width="114.5" height="1" fill="#f8f8f8" />
<rect x="263.5" y="626" width="1" height="27.5" fill="#f8f8f8" />
<rect x="286" y="559" width="113.5" height="26.5" fill="#ffff00" />
<rect x="286" y="559" width="113.5" height="1" fill="#202020" />
<rect x="286" y="559" width="1" height="26.5" fill="#202020" />
<rect x="286" y="585.5" width="114.5" height="1" fill="#f8f8f8" />
<rect x="399.5" y="559" width="1" height="27.5" fill="#f8f8f8" />
<rect x="286" y="626" width="113.5" height="26.5" fill="#00ff00" />
<rect x="286" y="626" width="113.5" height="1" fill="#202020" />
<rect x="286" y="626" width="1" height="26.5" fill="#202020" />
<rect x="286" y="652.5" width="114.5" height="1" fill="#f8f8f8" />
<rect x="399.5" y="626" width="1" height="27.5" fill="#f8f8f8" />
<rect x="506.7" y="559" width="112.5" height="26" fill="#0000f0" />
<rect x="506.7" y="559" width="112.5" height="1" fill="#202020" />
<rect x="506.7" y="559" width="1" height="26" fill="#202020" />
<rect x="506.7" y="585" width="113.5" height="1" fill="#f8f8f8" />
<rect x="619.2" y="559" width="1" height="27" fill="#f8f8f8" />
<rect x="506.7" y="592" width="112.5" height="26" fill="#0000f0" />
<rect x="506.7" y="592" width="112.5" height="1" fill="#202020" />
<rect x="506.7" y="592" width="1" height="26" fill="#202020" />
<rect x="506.7" y="618" width="113.5" height="1" fill="#f8f8f8" />
<rect x="619.2" y="592" width="1" height="27" fill="#f8f8f8" />
<rect x="506.7" y="625.7" width="112.5" height="26" fill="#0000f0" />
<rect x="506.7" y="625.7" width="112.5" height="1" fill="#202020" />
<rect x="506.7" y="625.7" width="1" height="26" fill="#202020" />
<rect x="506.7" y="651.7" width="113.5" height="1" fill="#f8f8f8" />
<rect x="619.2" y="625.7" width="1" height="27" fill="#f8f8f8" />
<text x="64.00" y="579.00" font-size="19" font-weight="normal" font-style="normal" fill="#000" textLength="58.50" lengthAdjust="spacingAndGlyphs" >137.1</text>
<text x="233.50" y="579.00" font-size="19" font-weight="normal" font-style="normal" fill="#000" textLength="26.50" lengthAdjust="spacingAndGlyphs" >63</text>
<text x="342.40" y="579.00" font-size="19" font-weight="normal" font-style="normal" fill="#000" textLength="52.00" lengthAdjust="spacingAndGlyphs" >4611</text>
<text x="64.00" y="645.50" font-size="19" font-weight="normal" font-style="normal" fill="#000" textLength="60.50" lengthAdjust="spacingAndGlyphs" >141.0</text>
<text x="233.50" y="645.50" font-size="19" font-weight="normal" font-style="normal" fill="#000" textLength="26.50" lengthAdjust="spacingAndGlyphs" >63</text>
<text x="342.40" y="645.50" font-size="19" font-weight="normal" font-style="normal" fill="#000" textLength="52.00" lengthAdjust="spacingAndGlyphs" >4611</text>
<text x="50.00" y="614.50" font-size="19" font-weight="normal" font-style="normal" fill="#000" textLength="32.50" lengthAdjust="spacingAndGlyphs" >lbft</text>
<text x="181.20" y="614.50" font-size="19" font-weight="normal" font-style="normal" fill="#000" textLength="46.50" lengthAdjust="spacingAndGlyphs" >mph</text>
<text x="316.00" y="614.50" font-size="19" font-weight="normal" font-style="normal" fill="#000" textLength="42.00" lengthAdjust="spacingAndGlyphs" >rpm</text>
<text x="435.50" y="580.80" font-size="19" font-weight="normal" font-style="normal" fill="#1414d0" textLength="47.00" lengthAdjust="spacingAndGlyphs" >ratio</text>
<text x="435.50" y="613.80" font-size="19" font-weight="normal" font-style="normal" fill="#1414d0" textLength="25.00" lengthAdjust="spacingAndGlyphs" >tcf</text>
<text x="435.50" y="646.80" font-size="19" font-weight="normal" font-style="normal" fill="#1414d0" textLength="46.50" lengthAdjust="spacingAndGlyphs" >gain</text>
<text x="554.00" y="579.00" font-size="19" font-weight="normal" font-style="normal" fill="#f4f4f4" textLength="62.00" lengthAdjust="spacingAndGlyphs" >5.107</text>
<text x="569.50" y="612.50" font-size="19" font-weight="normal" font-style="normal" fill="#f4f4f4" textLength="46.50" lengthAdjust="spacingAndGlyphs" >1.00</text>
<text x="583.00" y="646.00" font-size="19" font-weight="normal" font-style="normal" fill="#f4f4f4" textLength="33.00" lengthAdjust="spacingAndGlyphs" >3.9</text>
<rect x="643" y="551.5" width="631" height="1" fill="#fafafa" />
<rect x="643" y="551.5" width="1" height="112" fill="#fafafa" />
<rect x="645" y="553.5" width="627" height="1" fill="#8c8c8c" />
<rect x="645" y="553.5" width="1" height="108" fill="#8c8c8c" />
<rect x="645" y="661.5" width="628" height="1" fill="#fafafa" />
<rect x="1272.5" y="553.5" width="1" height="109" fill="#fafafa" />
<rect x="643" y="663.3" width="631" height="1" fill="#8c8c8c" />
<rect x="1274" y="551.5" width="1" height="113" fill="#8c8c8c" />
<rect x="655" y="559" width="113.5" height="26.5" fill="#ffff00" />
<rect x="655" y="559" width="113.5" height="1" fill="#202020" />
<rect x="655" y="559" width="1" height="26.5" fill="#202020" />
<rect x="655" y="585.5" width="114.5" height="1" fill="#f8f8f8" />
<rect x="768.5" y="559" width="1" height="27.5" fill="#f8f8f8" />
<rect x="655" y="626" width="113.5" height="26.5" fill="#00ff00" />
<rect x="655" y="626" width="113.5" height="1" fill="#202020" />
<rect x="655" y="626" width="1" height="26.5" fill="#202020" />
<rect x="655" y="652.5" width="114.5" height="1" fill="#f8f8f8" />
<rect x="768.5" y="626" width="1" height="27.5" fill="#f8f8f8" />
<rect x="790" y="559" width="113.5" height="26.5" fill="#ffff00" />
<rect x="790" y="559" width="113.5" height="1" fill="#202020" />
<rect x="790" y="559" width="1" height="26.5" fill="#202020" />
<rect x="790" y="585.5" width="114.5" height="1" fill="#f8f8f8" />
<rect x="903.5" y="559" width="1" height="27.5" fill="#f8f8f8" />
<rect x="790" y="626" width="113.5" height="26.5" fill="#00ff00" />
<rect x="790" y="626" width="113.5" height="1" fill="#202020" />
<rect x="790" y="626" width="1" height="26.5" fill="#202020" />
<rect x="790" y="652.5" width="114.5" height="1" fill="#f8f8f8" />
<rect x="903.5" y="626" width="1" height="27.5" fill="#f8f8f8" />
<rect x="926" y="559" width="113.5" height="26.5" fill="#ffff00" />
<rect x="926" y="559" width="113.5" height="1" fill="#202020" />
<rect x="926" y="559" width="1" height="26.5" fill="#202020" />
<rect x="926" y="585.5" width="114.5" height="1" fill="#f8f8f8" />
<rect x="1039.5" y="559" width="1" height="27.5" fill="#f8f8f8" />
<rect x="926" y="626" width="113.5" height="26.5" fill="#00ff00" />
<rect x="926" y="626" width="113.5" height="1" fill="#202020" />
<rect x="926" y="626" width="1" height="26.5" fill="#202020" />
<rect x="926" y="652.5" width="114.5" height="1" fill="#f8f8f8" />
<rect x="1039.5" y="626" width="1" height="27.5" fill="#f8f8f8" />
<rect x="1146.7" y="559" width="112.5" height="26" fill="#0000f0" />
<rect x="1146.7" y="559" width="112.5" height="1" fill="#202020" />
<rect x="1146.7" y="559" width="1" height="26" fill="#202020" />
<rect x="1146.7" y="585" width="113.5" height="1" fill="#f8f8f8" />
<rect x="1259.2" y="559" width="1" height="27" fill="#f8f8f8" />
<rect x="1146.7" y="592" width="112.5" height="26" fill="#0000f0" />
<rect x="1146.7" y="592" width="112.5" height="1" fill="#202020" />
<rect x="1146.7" y="592" width="1" height="26" fill="#202020" />
<rect x="1146.7" y="618" width="113.5" height="1" fill="#f8f8f8" />
<rect x="1259.2" y="592" width="1" height="27" fill="#f8f8f8" />
<rect x="1146.7" y="625.7" width="112.5" height="26" fill="#0000f0" />
<rect x="1146.7" y="625.7" width="112.5" height="1" fill="#202020" />
<rect x="1146.7" y="625.7" width="1" height="26" fill="#202020" />
<rect x="1146.7" y="651.7" width="113.5" height="1" fill="#f8f8f8" />
<rect x="1259.2" y="625.7" width="1" height="27" fill="#f8f8f8" />
<text x="702.50" y="579.00" font-size="19" font-weight="normal" font-style="normal" fill="#000" textLength="60.00" lengthAdjust="spacingAndGlyphs" >147.4</text>
<text x="873.50" y="579.00" font-size="19" font-weight="normal" font-style="normal" fill="#000" textLength="26.50" lengthAdjust="spacingAndGlyphs" >80</text>
<text x="980.40" y="579.00" font-size="19" font-weight="normal" font-style="normal" fill="#000" textLength="54.00" lengthAdjust="spacingAndGlyphs" >5792</text>
<text x="704.50" y="645.50" font-size="19" font-weight="normal" font-style="normal" fill="#000" textLength="60.00" lengthAdjust="spacingAndGlyphs" >151.7</text>
<text x="873.50" y="645.50" font-size="19" font-weight="normal" font-style="normal" fill="#000" textLength="26.50" lengthAdjust="spacingAndGlyphs" >80</text>
<text x="980.40" y="645.50" font-size="19" font-weight="normal" font-style="normal" fill="#000" textLength="54.00" lengthAdjust="spacingAndGlyphs" >5792</text>
<text x="690.50" y="614.50" font-size="19" font-weight="normal" font-style="normal" fill="#000" textLength="30.00" lengthAdjust="spacingAndGlyphs" >Hp</text>
<text x="824.50" y="614.50" font-size="19" font-weight="normal" font-style="normal" fill="#000" textLength="46.50" lengthAdjust="spacingAndGlyphs" >mph</text>
<text x="956.00" y="614.50" font-size="19" font-weight="normal" font-style="normal" fill="#000" textLength="42.00" lengthAdjust="spacingAndGlyphs" >rpm</text>
<text x="1075.50" y="580.80" font-size="19" font-weight="normal" font-style="normal" fill="#1414d0" textLength="47.00" lengthAdjust="spacingAndGlyphs" >ratio</text>
<text x="1075.50" y="613.80" font-size="19" font-weight="normal" font-style="normal" fill="#1414d0" textLength="25.00" lengthAdjust="spacingAndGlyphs" >tcf</text>
<text x="1075.50" y="646.80" font-size="19" font-weight="normal" font-style="normal" fill="#1414d0" textLength="46.50" lengthAdjust="spacingAndGlyphs" >gain</text>
<text x="1194.00" y="579.00" font-size="19" font-weight="normal" font-style="normal" fill="#f4f4f4" textLength="62.00" lengthAdjust="spacingAndGlyphs" >5.107</text>
<text x="1209.50" y="612.50" font-size="19" font-weight="normal" font-style="normal" fill="#f4f4f4" textLength="46.50" lengthAdjust="spacingAndGlyphs" >1.00</text>
<text x="1222.00" y="646.00" font-size="19" font-weight="normal" font-style="normal" fill="#f4f4f4" textLength="34.00" lengthAdjust="spacingAndGlyphs" >4.3</text>
<rect x="0" y="667.8" width="1280" height="1.5" fill="#101010" />
<rect x="0" y="669" width="1280" height="71" fill="#ffffff" />
<rect x="0" y="738" width="1280" height="2" fill="#3a3a20" />
<rect x="570.5" y="672.5" width="198.29999999999995" height="17.0" fill="#ffffff" />
<rect x="570.5" y="672.5" width="198.29999999999995" height="2" fill="#101010" />
<rect x="570.5" y="672.5" width="1.5" height="17.0" fill="#101010" />
<rect x="570.5" y="688.5" width="198.29999999999995" height="1" fill="#d8d8d8" />
<rect x="767.8" y="672.5" width="1" height="17.0" fill="#d8d8d8" />
<rect x="570.5" y="694.5" width="198.29999999999995" height="16.5" fill="#ffffff" />
<rect x="570.5" y="694.5" width="198.29999999999995" height="2" fill="#101010" />
<rect x="570.5" y="694.5" width="1.5" height="16.5" fill="#101010" />
<rect x="570.5" y="710" width="198.29999999999995" height="1" fill="#d8d8d8" />
<rect x="767.8" y="694.5" width="1" height="16.5" fill="#d8d8d8" />
<rect x="570.5" y="717" width="198.29999999999995" height="16.799999999999955" fill="#ffffff" />
<rect x="570.5" y="717" width="198.29999999999995" height="2" fill="#101010" />
<rect x="570.5" y="717" width="1.5" height="16.799999999999955" fill="#101010" />
<rect x="570.5" y="732.8" width="198.29999999999995" height="1" fill="#d8d8d8" />
<rect x="767.8" y="717" width="1" height="16.799999999999955" fill="#d8d8d8" />
<text x="510.80" y="685.00" font-size="9.8" font-weight="bold" font-style="normal" fill="#101010" textLength="50.40" lengthAdjust="spacingAndGlyphs" letter-spacing="0.4">Folder</text>
<text x="512.50" y="707.00" font-size="9.8" font-weight="bold" font-style="normal" fill="#101010" textLength="52.50" lengthAdjust="spacingAndGlyphs" letter-spacing="0.4">Run ID</text>
<text x="528.80" y="729.00" font-size="9.8" font-weight="bold" font-style="normal" fill="#101010" textLength="34.30" lengthAdjust="spacingAndGlyphs" letter-spacing="0.4">Date</text>
<text x="573.80" y="685.00" font-size="9.8" font-weight="bold" font-style="normal" fill="#101010" textLength="131.20" lengthAdjust="spacingAndGlyphs" letter-spacing="0.4">hps 2013 civic si</text>
<text x="573.80" y="707.00" font-size="9.8" font-weight="bold" font-style="normal" fill="#101010" textLength="4.70" lengthAdjust="spacingAndGlyphs" >1</text>
<text x="573.80" y="729.00" font-size="9.8" font-weight="bold" font-style="normal" fill="#101010" textLength="173.70" lengthAdjust="spacingAndGlyphs" letter-spacing="0.4">25-Jul-2013   12:29:55</text>
<g stroke="#000" stroke-width="0.8" stroke-linejoin="round">
<path d="M30.9 680 L50.8 680 L35.5 716.5 L14.4 716.5 Z M68.9 680 L88.9 680 L72.5 716.5 L52.5 716.5 Z M40 693.1 L72 693.1 L69.3 699.5 L37.3 699.5 Z" fill="#000"/>
<path d="M93 680 L142 680 C152 680 153 688 148 694 C145 698 140 699.5 132 699.5 L108.8 699.5 L98.2 716.5 L77.1 716.5 Z M114 686.6 L111.2 693.1 L124 693.1 C128 693.1 130 691 130 689 C130 687.3 128.5 686.6 126 686.6 Z" fill="#000" fill-rule="evenodd"/>
<path d="M166 679.3 L221.4 679.3 L217.8 688.8 L186.3 688.8 L205.5 705 C213 711.5 212 721.5 203 726.5 C199 728.8 193 729.7 184 729.7 L12.5 729.7 C8.5 729.7 8 726.5 9.5 723.5 L11 720.6 L171 720.6 L153.8 704 C146 696.5 148.5 683.5 166 679.3 Z" fill="#ec1c24" stroke="#3a0000" stroke-width="1"/>
</g>
<circle cx="15.3" cy="725.2" r="2.2" fill="none" stroke="#600" stroke-width="0.6"/>
<g font-style="italic" font-weight="bold" fill="#000" stroke="#000" stroke-width="4.6" stroke-linejoin="round">
<text x="233" y="698.3" font-size="26" textLength="210" lengthAdjust="spacingAndGlyphs">PERFORMANCE</text>
<text x="231" y="726.2" font-size="26" textLength="150" lengthAdjust="spacingAndGlyphs">PRODUCTS</text>
</g>
<g font-style="italic" font-weight="bold" fill="#fff" stroke="#fff" stroke-width="1.1" stroke-linejoin="round">
<text x="233" y="698.3" font-size="26" textLength="210" lengthAdjust="spacingAndGlyphs">PERFORMANCE</text>
<text x="231" y="726.2" font-size="26" textLength="150" lengthAdjust="spacingAndGlyphs">PRODUCTS</text>
</g>
<text x="0" y="0" font-size="38" font-weight="bold" fill="#1e5cc0" stroke="#1e5cc0" stroke-width="2.4" stroke-linejoin="round" textLength="222" lengthAdjust="spacingAndGlyphs" transform="translate(813 715.5) skewX(-16)">Dyna</text>
<text x="0" y="0" font-size="38" font-weight="bold" fill="#e01820" stroke="#e01820" stroke-width="2.4" stroke-linejoin="round" textLength="206" lengthAdjust="spacingAndGlyphs" transform="translate(1034 715.5) skewX(-16)">pack</text>
<text x="0" y="0" font-size="38" font-weight="bold" fill="#fff" stroke="#fff" stroke-width="5" stroke-linejoin="round" textLength="222" lengthAdjust="spacingAndGlyphs" transform="translate(810 710) skewX(-16)">Dyna</text>
<text x="0" y="0" font-size="38" font-weight="bold" fill="#fff" stroke="#fff" stroke-width="5" stroke-linejoin="round" textLength="206" lengthAdjust="spacingAndGlyphs" transform="translate(1031 710) skewX(-16)">pack</text>
<text x="0" y="0" font-size="38" font-weight="bold" fill="#dc1820" stroke="#dc1820" stroke-width="2.6" stroke-linejoin="round" textLength="222" lengthAdjust="spacingAndGlyphs" transform="translate(810 710) skewX(-16)">Dyna</text>
<text x="0" y="0" font-size="38" font-weight="bold" fill="#1e5cc0" stroke="#1e5cc0" stroke-width="2.6" stroke-linejoin="round" textLength="206" lengthAdjust="spacingAndGlyphs" transform="translate(1031 710) skewX(-16)">pack</text>
<text x="921.3" y="732.2" font-size="10" font-weight="bold" fill="#1a3a9c" stroke="#1a3a9c" stroke-width="0.5" letter-spacing="5" textLength="90.9" lengthAdjust="spacingAndGlyphs">CHASSIS</text>
<text x="1061" y="732.2" font-size="10" font-weight="bold" fill="#1a3a9c" stroke="#1a3a9c" stroke-width="0.5" letter-spacing="5" textLength="177" lengthAdjust="spacingAndGlyphs">DYNAMOMETERS</text>
</svg></body></html>
